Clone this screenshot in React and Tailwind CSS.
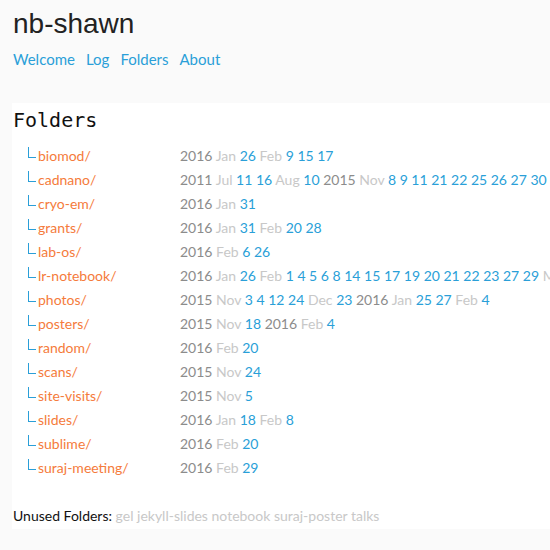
const folders = [
  ["biomod", "2016 Jan 26 Feb 9 15 17"],
  ["cadnano", "2011 Jul 11 16 Aug 10 2015 Nov 8 9 11 21 22 25 26 27 30 Dec 1 2"],
  ["cryo-em", "2016 Jan 31"],
  ["grants", "2016 Jan 31 Feb 20 28"],
  ["lab-os", "2016 Feb 6 26"],
  ["lr-notebook", "2016 Jan 26 Feb 1 4 5 6 8 14 15 17 19 20 21 22 23 27 29 Mar 1 2"],
  ["photos", "2015 Nov 3 4 12 24 Dec 23 2016 Jan 25 27 Feb 4"],
  ["posters", "2015 Nov 18 2016 Feb 4"],
  ["random", "2016 Feb 20"],
  ["scans", "2015 Nov 24"],
  ["site-visits", "2015 Nov 5"],
  ["slides", "2016 Jan 18 Feb 8"],
  ["sublime", "2016 Feb 20"],
  ["suraj-meeting", "2016 Feb 29"],
];

const unused = ["gel", "jekyll-slides", "notebook", "suraj-poster", "talks"];

// year / month / day get their own colour
function Dates({ text }) {
  const parts = text.split(" ");
  return (
    <span className="whitespace-nowrap">
      {parts.map((p, i) => {
        let cls = "text-[#2a9fd8]";
        if (/^\d{4}$/.test(p)) cls = "text-[#8c8c8c]";
        else if (/^[A-Za-z]+$/.test(p)) cls = "text-[#c8c8c8]";
        return (
          <span key={i} className={cls}>
            {p}
            {i < parts.length - 1 ? " " : ""}
          </span>
        );
      })}
    </span>
  );
}

export default function App() {
  return (
    <div className="min-h-screen w-[550px] overflow-hidden bg-[#fafafa] font-['Lato',sans-serif]">
      <header className="pl-[13px] pt-[9px]">
        <h1 className="font-['Liberation_Sans',sans-serif] text-[28px] leading-[30px] text-[#222]">
          nb-shawn
        </h1>
        <nav className="mt-[10px] flex gap-[11px] text-[15px] leading-[20px] text-[#2a9fd8]">
          <a>Welcome</a>
          <a>Log</a>
          <a>Folders</a>
          <a>About</a>
        </nav>
      </header>

      <main className="mt-[34px] ml-[12px] bg-white pt-[3px] pb-[3px]">
        <h2 className="pl-px font-['DejaVu_Sans_Mono',monospace] text-[20px] leading-[28px] text-[#111]">
          Folders
        </h2>
        <ul className="mt-[9px] pl-[16px]">
          {folders.map(([name, dates]) => (
            <li key={name} className="grid h-6 grid-cols-[152px_1fr] items-center text-[14px]">
              <span className="flex items-center text-[#f57b3b]">
                <span className="mb-[6px] mr-[2px] inline-block h-[11px] w-[8px] border-b border-l border-[#2a9fd8]" />
                {name}/
              </span>
              <Dates text={dates} />
            </li>
          ))}
        </ul>
        <p className="mt-[27px] pl-px text-[14px] leading-[20px] text-[#111]">
          Unused Folders:{" "}
          <span className="text-[#c8c8c8]">{unused.join(" ")}</span>
        </p>
      </main>
    </div>
  );
}
